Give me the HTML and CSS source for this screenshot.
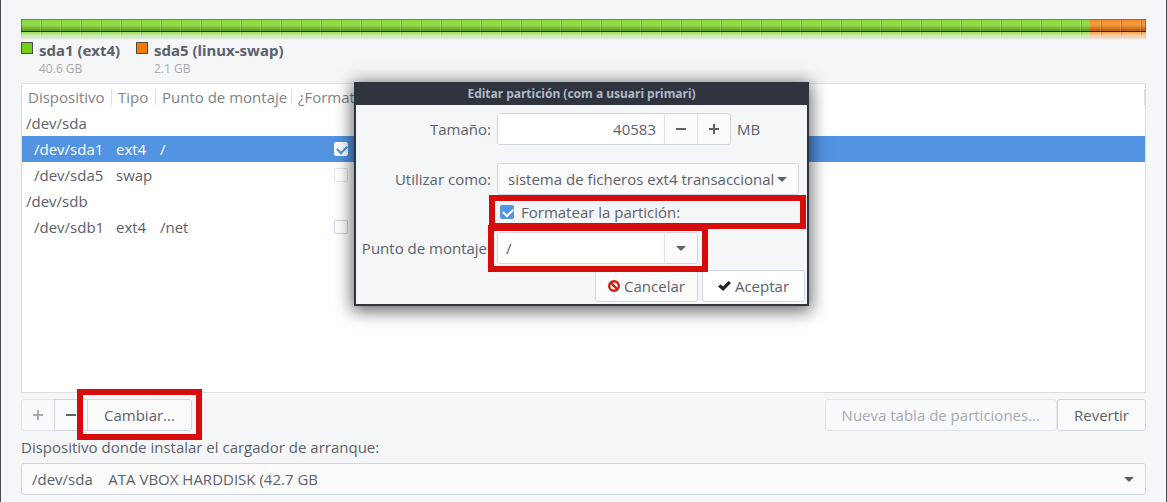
FILE: index.html
```html
<!DOCTYPE html>
<html lang="es">
<head>
    <meta charset="UTF-8">
    <meta name="viewport" content="width=device-width, initial-scale=1.0">
    <title>Editar partición</title>
    <link rel="stylesheet" href="styles.css">
</head>
<body>
    <main class="installer">
        <div class="disk">
            <div class="disk-bar"></div>
            <div class="disk-bar disk-shadow"></div>
        </div>

        <ul class="legend">
            <li>
                <span class="swatch swatch-ext4"></span>
                <div><strong>sda1 (ext4)</strong><small>40.6 GB</small></div>
            </li>
            <li>
                <span class="swatch swatch-swap"></span>
                <div><strong>sda5 (linux-swap)</strong><small>2.1 GB</small></div>
            </li>
        </ul>

        <div class="partitions">
            <table>
                <colgroup>
                    <col class="col-device">
                    <col class="col-type">
                    <col class="col-mount">
                    <col class="col-format">
                    <col>
                </colgroup>
                <thead>
                    <tr>
                        <th><span>Dispositivo</span></th>
                        <th><span>Tipo</span></th>
                        <th><span>Punto de montaje</span></th>
                        <th><span>¿Formatear?</span></th>
                        <th><span></span></th>
                    </tr>
                </thead>
                <tbody>
                    <tr>
                        <td colspan="5">/dev/sda</td>
                    </tr>
                    <tr class="selected">
                        <td class="child">/dev/sda1</td>
                        <td>ext4</td>
                        <td>/</td>
                        <td><input type="checkbox" class="check check-light" aria-label="Formatear sda1" checked></td>
                        <td></td>
                    </tr>
                    <tr>
                        <td class="child">/dev/sda5</td>
                        <td>swap</td>
                        <td></td>
                        <td><input type="checkbox" class="check" aria-label="Formatear sda5" disabled></td>
                        <td></td>
                    </tr>
                    <tr>
                        <td colspan="5">/dev/sdb</td>
                    </tr>
                    <tr>
                        <td class="child">/dev/sdb1</td>
                        <td>ext4</td>
                        <td>/net</td>
                        <td><input type="checkbox" class="check" aria-label="Formatear sdb1"></td>
                        <td></td>
                    </tr>
                </tbody>
            </table>
        </div>

        <div class="toolbar">
            <div class="group">
                <button type="button" class="btn btn-icon" aria-label="Añadir" disabled>
                    <svg width="12" height="12" viewBox="0 0 12 12"><path d="M1 5h10v2H1zM5 1h2v10H5z"/></svg>
                </button>
                <button type="button" class="btn btn-icon" aria-label="Quitar">
                    <svg width="12" height="12" viewBox="0 0 12 12"><path d="M1 5h10v2H1z"/></svg>
                </button>
                <div class="marked marked-change">
                    <button type="button" class="btn">Cambiar...</button>
                </div>
            </div>
            <div class="group-right">
                <button type="button" class="btn" disabled>Nueva tabla de particiones...</button>
                <button type="button" class="btn">Revertir</button>
            </div>
        </div>

        <label class="boot-label" for="boot">Dispositivo donde instalar el cargador de arranque:</label>
        <div class="select">
            <select id="boot" class="boot-select">
                <option>/dev/sda&nbsp;&nbsp;&nbsp;&nbsp;ATA VBOX HARDDISK (42.7 GB)</option>
            </select>
            <svg width="10" height="5" viewBox="0 0 10 5"><path d="M0 0h10L5 5z"/></svg>
        </div>
    </main>

    <section class="dialog" role="dialog" aria-labelledby="dialogTitle">
        <h1 id="dialogTitle">Editar partición (com a usuari primari)</h1>
        <form>
            <div class="row row-size">
                <label for="size">Tamaño:</label>
                <div class="spin">
                    <input type="text" id="size" value="40583">
                    <button type="button" aria-label="Menos">
                        <svg width="12" height="12" viewBox="0 0 12 12"><path d="M1 5h10v2H1z"/></svg>
                    </button>
                    <button type="button" aria-label="Más">
                        <svg width="12" height="12" viewBox="0 0 12 12"><path d="M1 5h10v2H1zM5 1h2v10H5z"/></svg>
                    </button>
                </div>
                <span>MB</span>
            </div>
            <div class="row">
                <label for="use">Utilizar como:</label>
                <div class="select select-use">
                    <select id="use">
                        <option>sistema de ficheros ext4 transaccional</option>
                    </select>
                    <svg width="10" height="5" viewBox="0 0 10 5"><path d="M0 0h10L5 5z"/></svg>
                </div>
            </div>
            <div class="row row-format">
                <div class="marked marked-format">
                    <input type="checkbox" id="format" class="check" checked>
                    <label for="format">Formatear la partición:</label>
                </div>
            </div>
            <div class="row">
                <label for="mount">Punto de montaje:</label>
                <div class="marked marked-mount">
                    <div class="combo">
                        <input type="text" id="mount" value="/">
                        <button type="button" aria-label="Abrir lista">
                            <svg width="10" height="5" viewBox="0 0 10 5"><path d="M0 0h10L5 5z"/></svg>
                        </button>
                    </div>
                </div>
            </div>
            <div class="actions">
                <button type="button" class="btn">
                    <svg width="12" height="12" viewBox="0 0 12 12"><circle class="stop" cx="6" cy="6" r="4.8"/><path class="stop" d="M2.5 2.5l7 7"/></svg>
                    Cancelar
                </button>
                <button type="button" class="btn btn-accept">
                    <svg width="13" height="12" viewBox="0 0 13 12"><path class="tick" d="M0 6.5L2.5 4.2 5 6.5 10.5 1 13 3 5.2 11z"/></svg>
                    Aceptar
                </button>
            </div>
        </form>
    </section>
</body>
</html>
```

FILE: styles.css
```css
* {
    box-sizing: border-box;
}
body {
    margin: 0;
    min-height: 100vh;
    border: solid #4b4a54;
    border-width: 0 1px;
    background: #f5f6f8;
    color: #5c616c;
    font: 15px/20px "Open Sans", "Noto Sans", sans-serif;
}
input, select, button {
    font: inherit;
    color: inherit;
    margin: 0;
}
svg {
    fill: #5c616c;
    flex: none;
}
.installer {
    padding: 19px 20px 7px;
}

/* disk usage bar */
.disk {
    height: 23px;
}
.disk-bar {
    height: 13px;
    border: 1px solid rgba(40, 60, 0, 0.4);
    border-bottom-color: rgba(0, 0, 0, 0.6);
    background:
        repeating-linear-gradient(to right, transparent 0 19px, rgba(255, 255, 255, 0.2) 19px 20px),
        repeating-linear-gradient(to right, rgba(0, 0, 0, 0.18) 0 1px, transparent 1px 20px),
        linear-gradient(rgba(255, 255, 255, 0.14), rgba(255, 255, 255, 0.24) 45%, rgba(0, 0, 0, 0.32)),
        linear-gradient(to right, #73d216 95%, #f57900 95%);
    background-origin: border-box;
}
.disk-shadow {
    height: 8px;
    border: none;
    opacity: 0.8;
    -webkit-mask-image: linear-gradient(#000, transparent);
    mask-image: linear-gradient(#000, transparent);
}
.legend {
    display: flex;
    gap: 16px;
    margin: 0;
    padding: 0;
    list-style: none;
}
.legend li {
    display: flex;
    gap: 6px;
}
.legend strong,
.legend small {
    display: block;
}
.legend strong {
    font-family: "Noto Sans", sans-serif;
    line-height: 17px;
}
.legend small {
    color: #a5a8ae;
    font-size: 12px;
    line-height: 19px;
}
.swatch {
    width: 12px;
    height: 12px;
    border: 1px solid #4c4f48;
}
.swatch-ext4 {
    background: #73d216;
}
.swatch-swap {
    background: #f57900;
}

/* partition list */
.partitions {
    height: 310px;
    margin-top: 5px;
    border: 1px solid #dcdfe3;
    background: #fff;
}
table {
    width: 100%;
    table-layout: fixed;
    border-collapse: collapse;
}
.col-device {
    width: 90px;
}
.col-type {
    width: 44px;
}
.col-mount {
    width: 136px;
}
.col-format {
    width: 98px;
}
th,
td {
    height: 26px;
    padding: 0 4px;
    text-align: left;
    white-space: nowrap;
}
th {
    padding: 0;
    color: #7f838b;
    font-weight: normal;
}
th span {
    display: block;
    height: 16px;
    padding-left: 6px;
    border-right: 1px solid #dcdfe3;
    line-height: 16px;
}
td.child {
    padding-left: 12px;
}
td .check {
    margin: 0 auto;
}
.selected {
    background: #5294e2;
    color: #fff;
}
.check {
    appearance: none;
    display: block;
    width: 14px;
    height: 14px;
    border: 1px solid #cfd6e6;
    border-radius: 2px;
    background: #fff;
}
.check:disabled {
    opacity: 0.6;
}
.check:checked {
    border-color: #5294e2;
    background: #5294e2;
}
.check:checked::before {
    content: "";
    display: block;
    width: 8px;
    height: 5px;
    margin: 2px;
    border: solid #fff;
    border-width: 0 0 2px 2px;
    transform: rotate(-45deg);
}
.check-light:checked {
    border-color: #fff;
    background: #fff;
}
.check-light:checked::before {
    border-color: #5294e2;
}

/* buttons and fields */
.btn {
    display: flex;
    align-items: center;
    justify-content: center;
    gap: 4px;
    height: 32px;
    padding: 0 16px;
    border: 1px solid #cfd6e6;
    border-radius: 3px;
    background: #fbfbfc;
    white-space: nowrap;
}
.btn:disabled {
    border-color: #e0e4ee;
    background: #f8f9fb;
    color: #a7aab0;
}
.btn:disabled svg {
    fill: #a7aab0;
}
.btn-icon {
    width: 34px;
    padding: 0;
}
.toolbar {
    display: flex;
    justify-content: space-between;
    margin-top: 6px;
}
.group,
.group-right {
    display: flex;
}
.group > * + * {
    margin-left: -1px;
}
.group .btn {
    border-radius: 0;
}
.group > .btn:first-child {
    border-radius: 3px 0 0 3px;
}
.group .marked .btn {
    border-radius: 0 3px 3px 0;
}
.boot-label {
    display: block;
    margin: 6px 0;
}
.select {
    display: grid;
    align-items: center;
}
.select > * {
    grid-area: 1 / 1;
}
.select > svg {
    justify-self: end;
    margin-right: 12px;
    pointer-events: none;
}
select {
    appearance: none;
    width: 100%;
    height: 32px;
    padding: 0 24px 0 10px;
    border: 1px solid #cfd6e6;
    border-radius: 3px;
    background: #fbfbfc;
}
.boot-select {
    padding-right: calc(100% - 297px);
}

/* red frames round the controls to use */
.marked {
    position: relative;
}
.marked::after {
    content: "";
    position: absolute;
    z-index: 1;
    border: 6px solid #d60c0c;
    pointer-events: none;
}
.marked-change::after {
    inset: -10px -10px -9px -10px;
}
.marked-format::after {
    inset: 0 -7px 0 -8px;
}
.marked-mount::after {
    inset: -7px -10px -8px -9px;
}

/* dialog */
.dialog {
    position: absolute;
    top: 82px;
    left: 354px;
    width: 455px;
    border: 2px solid #2f343f;
    border-top-width: 1px;
    background: #f5f6f8;
    box-shadow: 0 3px 16px 2px rgba(0, 0, 0, 0.6);
}
.dialog h1 {
    margin: 0;
    background: #2f343f;
    color: #afb8c6;
    font: bold 12px/22px "Noto Sans", sans-serif;
    text-align: center;
}
.dialog form {
    padding: 8px 2px 2px;
}
.row {
    display: grid;
    grid-template-columns: 133px auto auto;
    justify-content: start;
    align-items: center;
    column-gap: 6px;
}
.row > label {
    text-align: right;
    white-space: nowrap;
}
.row-size {
    margin-bottom: 18px;
}
.spin,
.combo {
    display: flex;
    height: 32px;
    border: 1px solid #cfd6e6;
    border-radius: 3px;
    background: #fbfbfc;
}
.spin input,
.combo input {
    width: 166px;
    padding: 0 8px;
    border: none;
    background: #fff;
}
.spin input {
    text-align: right;
}
.spin button,
.combo button {
    display: flex;
    align-items: center;
    justify-content: center;
    width: 33px;
    padding: 0;
    border: none;
    border-left: 1px solid #dfe3ed;
    background: none;
}
.select-use {
    width: 302px;
}
.row-format {
    margin-bottom: 3px;
}
.marked-format {
    display: flex;
    grid-column: 2;
    align-items: center;
    gap: 7px;
    width: 302px;
    height: 34px;
    padding-left: 3px;
}
.actions {
    display: flex;
    justify-content: flex-end;
    gap: 4px;
    margin-top: 6px;
}
.actions .btn {
    width: 103px;
    padding: 0;
}
.actions .btn-accept {
    background: #fff;
}
.stop {
    fill: none;
    stroke: #cc1f0c;
    stroke-width: 2.4;
}
.tick {
    fill: #222;
}
```
